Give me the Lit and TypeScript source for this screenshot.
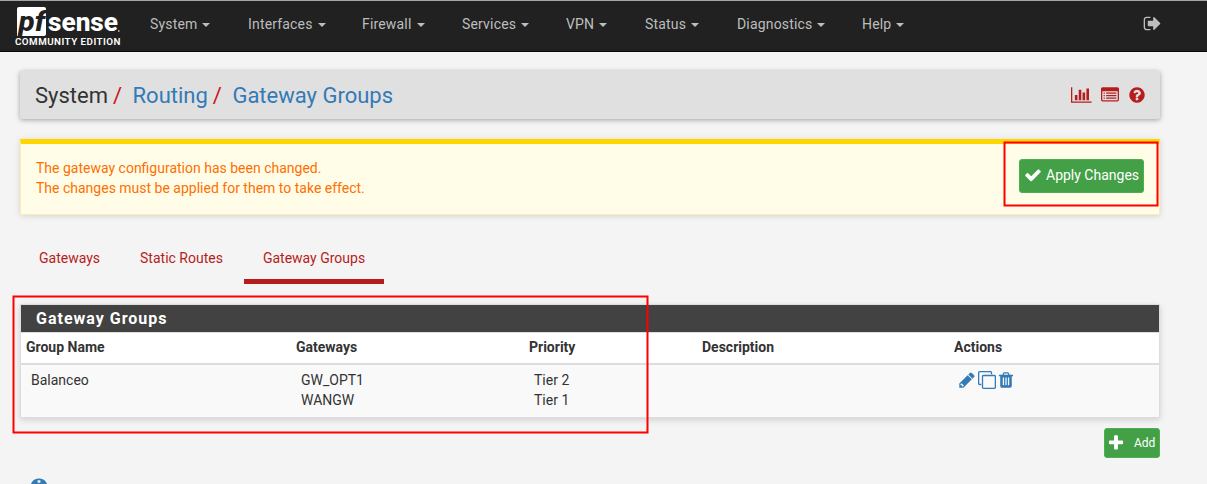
import { LitElement, html, svg, css } from "lit";
import { customElement, property } from "lit/decorators.js";

const DISC = "M1664 896q0 209-103 385.5t-279.5 279.5-385.5 103-385.5-103-279.5-279.5-103-385.5 103-385.5 279.5-279.5 385.5-103 385.5 103 279.5 279.5 103 385.5z";

const ICONS: Record<string, string> = {
  check: "M1671 566q0 40-28 68l-724 724-136 136q-28 28-68 28t-68-28l-136-136-362-362q-28-28-28-68t28-68l136-136q28-28 68-28t68 28l294 295 656-657q28-28 68-28t68 28l136 136q28 28 28 68z",
  plus: "M1600 736v192q0 40-28 68t-68 28h-416v416q0 40-28 68t-68 28h-192q-40 0-68-28t-28-68v-416h-416q-40 0-68-28t-28-68v-192q0-40 28-68t68-28h416v-416q0-40 28-68t68-28h192q40 0 68 28t28 68v416h416q40 0 68 28t28 68z",
  pencil: "M491 1536l91-91-235-235-91 91v107h128v128h107zM960 416l416 416-832 832h-416v-416zm683 96q0 53-37 90l-166 166-416-416 166-165q36-38 90-38 53 0 91 38l235 234q37 39 37 91z",
  clone: "M1664 1632v-1088q0-13-9.5-22.5t-22.5-9.5h-1088q-13 0-22.5 9.5t-9.5 22.5v1088q0 13 9.5 22.5t22.5 9.5h1088q13 0 22.5-9.5t9.5-22.5zm128-1088v1088q0 66-47 113t-113 47h-1088q-66 0-113-47t-47-113v-1088q0-66 47-113t113-47h1088q66 0 113 47t47 113zm-384-384v160h-128v-160q0-13-9.5-22.5t-22.5-9.5h-1088q-13 0-22.5 9.5t-9.5 22.5v1088q0 13 9.5 22.5t22.5 9.5h160v128h-160q-66 0-113-47t-47-113v-1088q0-66 47-113t113-47h1088q66 0 113 47t47 113z",
  trash: "M704 1376v-704q0-14-9-23t-23-9h-64q-14 0-23 9t-9 23v704q0 14 9 23t23 9h64q14 0 23-9t9-23zm256 0v-704q0-14-9-23t-23-9h-64q-14 0-23 9t-9 23v704q0 14 9 23t23 9h64q14 0 23-9t9-23zm256 0v-704q0-14-9-23t-23-9h-64q-14 0-23 9t-9 23v704q0 14 9 23t23 9h64q14 0 23-9t9-23zm-544-992h448l-48-117q-7-9-17-11h-317q-10 2-17 11zm928 32v64q0 14-9 23t-23 9h-96v948q0 83-47 143.5t-113 60.5h-832q-66 0-113-58.5t-47-141.5v-952h-96q-14 0-23-9t-9-23v-64q0-14 9-23t23-9h309l70-167q15-37 54-63t79-26h320q40 0 79 26t54 63l70 167h309q14 0 23 9t9 23z",
  question: DISC + "M1024 1376v-192q0-14-9-23t-23-9h-192q-14 0-23 9t-9 23v192q0 14 9 23t23 9h192q14 0 23-9t9-23zm256-672q0-88-55.5-163t-138.5-116-170-41q-243 0-371 213-15 24 8 42l132 100q7 6 19 6 16 0 25-12 53-68 86-92 34-24 86-24 48 0 85.5 26t37.5 59q0 38-20 61t-68 45q-63 28-115.5 86.5t-52.5 125.5v36q0 14 9 23t23 9h192q14 0 23-9t9-23q0-19 21.5-49.5t54.5-49.5q32-18 49-28.5t46-35 44.5-48 28-60.5 12.5-81z",
  info: DISC + "M1152 1376v-160q0-14-9-23t-23-9h-96v-512q0-14-9-23t-23-9h-320q-14 0-23 9t-9 23v160q0 14 9 23t23 9h96v320h-96q-14 0-23 9t-9 23v160q0 14 9 23t23 9h448q14 0 23-9t9-23zm-128-896v-160q0-14-9-23t-23-9h-192q-14 0-23 9t-9 23v160q0 14 9 23t23 9h192q14 0 23-9t9-23z",
  signout: "M704 1440q0 4 1 20t.5 26.5-3 23.5-10 19.5-20.5 6.5h-320q-119 0-203.5-84.5t-84.5-203.5v-704q0-119 84.5-203.5t203.5-84.5h320q13 0 22.5 9.5t9.5 22.5q0 4 1 20t.5 26.5-3 23.5-10 19.5-20.5 6.5h-320q-66 0-113 47t-47 113v704q0 66 47 113t113 47h312l11.5 1 11.5 3 8 5.5 7 9 2 13.5zm928-544q0 26-19 45l-544 544q-19 19-45 19t-45-19-19-45v-288h-448q-26 0-45-19t-19-45v-384q0-26 19-45t45-19h448v-288q0-26 19-45t45-19 45 19l544 544q19 19 19 45z",
  chart: "M640 896v512h-256v-512h256zm384-512v1024h-256v-1024h256zm1024 1152v128h-2048v-1536h128v1408h1920zm-640-896v768h-256v-768h256zm384-384v1152h-256v-1152h256z",
  list: "M256 1152h128v128h-128zM256 896h128v128h-128zM256 640h128v128h-128zM512 1152h1024v128h-1024zM512 896h1024v128h-1024zM512 640h1024v128h-1024zM1664 1376v-832q0-13-9.5-22.5t-22.5-9.5h-1472q-13 0-22.5 9.5t-9.5 22.5v832q0 13 9.5 22.5t22.5 9.5h1472q13 0 22.5-9.5t9.5-22.5zm128-1088v1088q0 66-47 113t-113 47h-1472q-66 0-113-47t-47-113v-1088q0-66 47-113t113-47h1472q66 0 113 47t47 113z",
};

@customElement("fa-icon")
class FaIcon extends LitElement {
  @property() name = "";
  @property({ type: Number }) size = 18;
  static styles = css`
    :host { display: inline-flex; flex: none; }
    svg { display: block; fill: currentColor; }
  `;
  render() {
    const units = this.name === "chart" ? 2048 : 1792;
    return html`<svg width=${(this.size * units) / 1792} height=${this.size} viewBox="0 0 ${units} 1792">
      ${svg`<path fill-rule="evenodd" d=${ICONS[this.name]}></path>`}
    </svg>`;
  }
}

@customElement("app-root")
class AppRoot extends LitElement {
  static styles = css`
    :host {
      display: block; position: relative; height: 484px; overflow: hidden; box-sizing: border-box;
      background: #f4f4f4; color: #333; font: 14px/20px Roboto, sans-serif;
    }
    * { box-sizing: border-box; }
    .nav { height: 52px; background: #212121; border-top: 1px solid #a5a5a5; border-bottom: 1px solid #080808; display: flex; padding-left: 13px; color: #bdbdbd; }
    .logo { display: block; width: 112px; height: 50px; margin-right: 25px; }
    .menu { display: grid; grid-template-columns: 98px 114px 100px 104px 79px 92px 125px 90px; font-size: 14px; line-height: 47px; letter-spacing: 0.17px; }
    .caret { display: inline-block; border: 4px solid transparent; border-top-color: currentColor; border-bottom: 0; margin-left: 5px; vertical-align: 2px; }
    .exit { margin: 13px 45px 0 auto; }
    .page { width: 1140px; margin: 19px 0 0 20px; }
    .crumbs { height: 48px; background: #e0e0e0; box-shadow: 0 1px 5px rgba(0,0,0,.35); display: flex; align-items: center; padding: 2px 14px 0 15px; font-size: 22px; border-radius: 2px; }
    .crumbs a { color: #337ab7; }
    .slash { color: #c9151b; margin: 0 10.5px 0 5px; }
    .tools { margin: -2px 0 0 auto; display: flex; gap: 9px; color: #b71c1c; align-items: center; }
    .alert { margin-top: 20px; height: 76px; background: #fffde7; border: 1px solid #ffecb3; border-top: 5px solid #ffd600; box-shadow: 0 1px 6px rgba(0,0,0,.14); color: #ff6f00; padding: 14px 15px; display: flex; justify-content: space-between; }
    .btn { background: #43a047; border: 1px solid #4caf50; border-radius: 3px; color: #fff; display: flex; align-items: center; }
    .apply { width: 125px; height: 34px; margin-top: 1px; padding: 0 0 2px 4px; gap: 4px; }
    .tabs { display: flex; gap: 2px; height: 69px; padding-top: 29px; color: #b71c1c; align-items: stretch; }
    .tab { padding: 4px 19px 0; }
    .tab.active { border-bottom: 5px solid #b71c1c; }
    .panel { margin-top: 20px; height: 114px; border: 1px solid #ddd; background: #f9f9f9; box-shadow: 0 2px 6px rgba(0,0,0,.15); }
    .title { height: 27px; background: #424242; color: #fff; font-size: 16px; line-height: 28px; font-weight: 700; letter-spacing: 1px; padding-left: 15px; }
    .row { display: grid; grid-template-columns: 270px 233px 173px 252px 1fr; padding-left: 5px; }
    .head { height: 33px; background: #fff; border-top: 1px solid #ddd; border-bottom: 2px solid #ddd; font-weight: 700; line-height: 29px; }
    .body { padding: 5px 0 0 10px; }
    .actions { display: flex; color: #337ab7; gap: 1.5px; margin-left: -1px; padding-top: 1px; }
    .add { width: 56px; height: 30px; margin: 10px 0 0 auto; font-size: 12px; padding-left: 2px; gap: 9px; }
    .info { color: #337ab7; display: flex; margin: 19px 0 0 8.5px; }
    .marks { position: absolute; left: 0; top: 0; pointer-events: none; fill: none; stroke: #f00; stroke-width: 2; }
  `;
  render() {
    const menu = ["System", "Interfaces", "Firewall", "Services", "VPN", "Status", "Diagnostics", "Help"];
    return html`
      <nav class="nav">
        <svg class="logo" viewBox="13 1 112 50" font-family="Roboto, sans-serif" fill="#fff">
          <path d="M19 7h25q2 0 2 2v25q0 2-2 2H17V9q0-2 2-2z"></path>
          <text x="18.5" y="31" font-size="28" font-weight="800" font-style="italic" fill="#212121" textLength="26.5" lengthAdjust="spacingAndGlyphs">pf</text>
          <text x="48" y="31" font-size="26.5" font-weight="800" textLength="70" lengthAdjust="spacingAndGlyphs">sense</text>
          <circle cx="118.8" cy="31" r=".8"></circle>
          <text x="15" y="45" font-size="9.8" font-weight="600" textLength="105.5">COMMUNITY EDITION</text>
        </svg>
        <div class="menu">${menu.map((m) => html`<span>${m}<i class="caret"></i></span>`)}</div>
        <fa-icon class="exit" name="signout" size="19"></fa-icon>
      </nav>
      <main class="page">
        <header class="crumbs">
          <span>System</span><span class="slash">/</span><a>Routing</a><span class="slash">/</span><a>Gateway Groups</a>
          <div class="tools">
            <fa-icon name="chart" size="18"></fa-icon><fa-icon name="list" size="18"></fa-icon><fa-icon name="question" size="18"></fa-icon>
          </div>
        </header>
        <section class="alert">
          <div>The gateway configuration has been changed.<br />The changes must be applied for them to take effect.</div>
          <div class="btn apply"><fa-icon name="check" size="18"></fa-icon>Apply Changes</div>
        </section>
        <div class="tabs">
          <span class="tab">Gateways</span><span class="tab">Static Routes</span><span class="tab active">Gateway Groups</span>
        </div>
        <section class="panel">
          <div class="title">Gateway Groups</div>
          <div class="row head"><span>Group Name</span><span>Gateways</span><span>Priority</span><span>Description</span><span>Actions</span></div>
          <div class="row body">
            <span>Balanceo</span><span>GW_OPT1<br />WANGW</span><span>Tier 2<br />Tier 1</span><span></span>
            <span class="actions"><fa-icon name="pencil" size="18"></fa-icon><fa-icon name="clone" size="18"></fa-icon><fa-icon name="trash" size="18"></fa-icon></span>
          </div>
        </section>
        <div class="btn add"><fa-icon name="plus" size="18"></fa-icon>Add</div>
        <div class="info"><fa-icon name="info" size="20"></fa-icon></div>
      </main>
      <svg class="marks" width="1207" height="484">
        <rect x="1004.5" y="142.5" width="153" height="63"></rect>
        <rect x="13.5" y="296.5" width="634" height="136"></rect>
      </svg>
    `;
  }
}
